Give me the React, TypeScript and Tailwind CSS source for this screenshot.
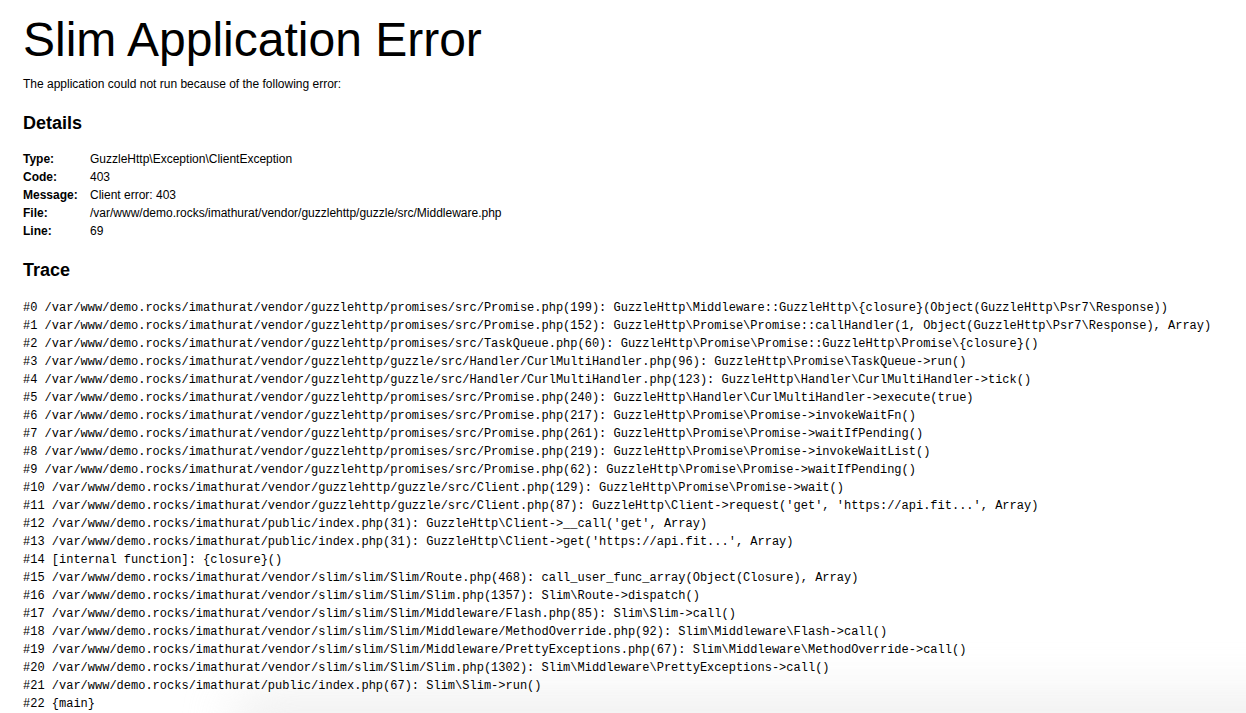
import React from 'react';

const details: [string, string][] = [
  ['Type:', String.raw`GuzzleHttp\Exception\ClientException`],
  ['Code:', '403'],
  ['Message:', 'Client error: 403'],
  ['File:', '/var/www/demo.rocks/imathurat/vendor/guzzlehttp/guzzle/src/Middleware.php'],
  ['Line:', '69'],
];

const trace = String.raw`#0 /var/www/demo.rocks/imathurat/vendor/guzzlehttp/promises/src/Promise.php(199): GuzzleHttp\Middleware::GuzzleHttp\{closure}(Object(GuzzleHttp\Psr7\Response))
#1 /var/www/demo.rocks/imathurat/vendor/guzzlehttp/promises/src/Promise.php(152): GuzzleHttp\Promise\Promise::callHandler(1, Object(GuzzleHttp\Psr7\Response), Array)
#2 /var/www/demo.rocks/imathurat/vendor/guzzlehttp/promises/src/TaskQueue.php(60): GuzzleHttp\Promise\Promise::GuzzleHttp\Promise\{closure}()
#3 /var/www/demo.rocks/imathurat/vendor/guzzlehttp/guzzle/src/Handler/CurlMultiHandler.php(96): GuzzleHttp\Promise\TaskQueue->run()
#4 /var/www/demo.rocks/imathurat/vendor/guzzlehttp/guzzle/src/Handler/CurlMultiHandler.php(123): GuzzleHttp\Handler\CurlMultiHandler->tick()
#5 /var/www/demo.rocks/imathurat/vendor/guzzlehttp/promises/src/Promise.php(240): GuzzleHttp\Handler\CurlMultiHandler->execute(true)
#6 /var/www/demo.rocks/imathurat/vendor/guzzlehttp/promises/src/Promise.php(217): GuzzleHttp\Promise\Promise->invokeWaitFn()
#7 /var/www/demo.rocks/imathurat/vendor/guzzlehttp/promises/src/Promise.php(261): GuzzleHttp\Promise\Promise->waitIfPending()
#8 /var/www/demo.rocks/imathurat/vendor/guzzlehttp/promises/src/Promise.php(219): GuzzleHttp\Promise\Promise->invokeWaitList()
#9 /var/www/demo.rocks/imathurat/vendor/guzzlehttp/promises/src/Promise.php(62): GuzzleHttp\Promise\Promise->waitIfPending()
#10 /var/www/demo.rocks/imathurat/vendor/guzzlehttp/guzzle/src/Client.php(129): GuzzleHttp\Promise\Promise->wait()
#11 /var/www/demo.rocks/imathurat/vendor/guzzlehttp/guzzle/src/Client.php(87): GuzzleHttp\Client->request('get', 'https://api.fit...', Array)
#12 /var/www/demo.rocks/imathurat/public/index.php(31): GuzzleHttp\Client->__call('get', Array)
#13 /var/www/demo.rocks/imathurat/public/index.php(31): GuzzleHttp\Client->get('https://api.fit...', Array)
#14 [internal function]: {closure}()
#15 /var/www/demo.rocks/imathurat/vendor/slim/slim/Slim/Route.php(468): call_user_func_array(Object(Closure), Array)
#16 /var/www/demo.rocks/imathurat/vendor/slim/slim/Slim/Slim.php(1357): Slim\Route->dispatch()
#17 /var/www/demo.rocks/imathurat/vendor/slim/slim/Slim/Middleware/Flash.php(85): Slim\Slim->call()
#18 /var/www/demo.rocks/imathurat/vendor/slim/slim/Slim/Middleware/MethodOverride.php(92): Slim\Middleware\Flash->call()
#19 /var/www/demo.rocks/imathurat/vendor/slim/slim/Slim/Middleware/PrettyExceptions.php(67): Slim\Middleware\MethodOverride->call()
#20 /var/www/demo.rocks/imathurat/vendor/slim/slim/Slim/Slim.php(1302): Slim\Middleware\PrettyExceptions->call()
#21 /var/www/demo.rocks/imathurat/public/index.php(67): Slim\Slim->run()
#22 {main}`.split('\n');

export default function App() {
  return (
    <div className="relative h-[713px] overflow-hidden bg-white text-black font-['Liberation_Sans',Arial,sans-serif] text-[12px] leading-[18px]">
      {/* faint window shadow along the bottom edge, behind the text */}
      <div className="pointer-events-none absolute bottom-[-34px] left-[230px] right-[-80px] h-[52px] rounded-full bg-[#e4e4e4] opacity-60 blur-xl" />

      <div className="relative px-[23px] pt-[16px]">
        <h1 className="text-[48px] leading-[48px] font-normal">Slim Application Error</h1>
        <p className="mt-[11px]">The application could not run because of the following error:</p>

        <h2 className="mt-[17px] text-[18px] leading-[27px] font-bold">Details</h2>
        <div className="mt-[13px]">
          {details.map(([label, value]) => (
            <div key={label} className="whitespace-nowrap">
              <strong className="inline-block w-[67px] font-bold">{label}</strong>
              {value}
            </div>
          ))}
        </div>

        <h2 className="mt-[17px] text-[18px] leading-[27px] font-bold">Trace</h2>
        <pre className="mt-[15px] font-['Liberation_Mono','Courier_New',monospace] text-[12px] leading-[18px]">
          {trace.map((line) => (
            <div key={line}>{line}</div>
          ))}
        </pre>
      </div>
    </div>
  );
}
